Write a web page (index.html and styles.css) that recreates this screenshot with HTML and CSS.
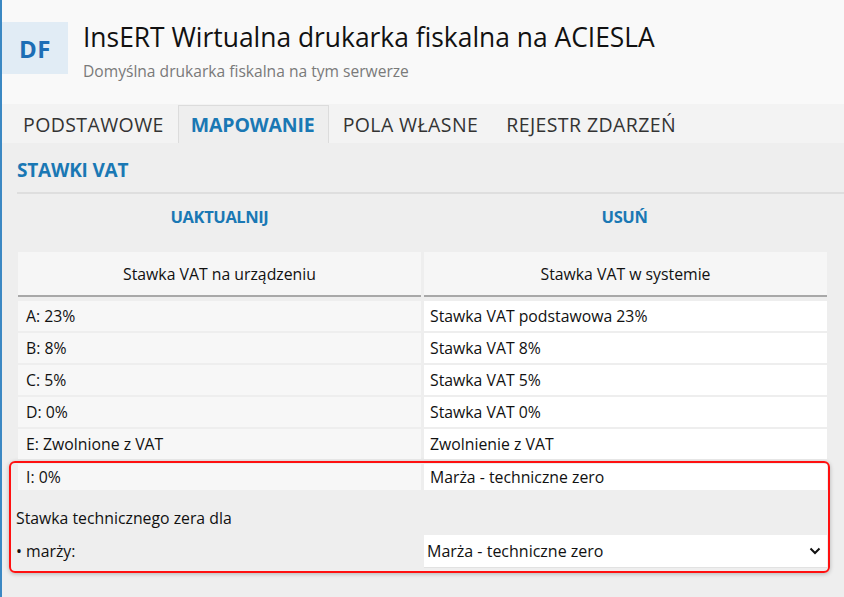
FILE: index.html
```html
<!DOCTYPE html>
<html lang="pl">

<head>
    <meta charset="UTF-8">
    <meta name="viewport" content="width=device-width, initial-scale=1.0">
    <title>Drukarka fiskalna</title>
    <link rel="stylesheet" href="styles.css">
</head>

<body>
    <div class="page">
        <div class="header">
            <div class="avatar">DF</div>
            <div class="header_text">
                <div class="header_title">InsERT Wirtualna drukarka fiskalna na ACIESLA</div>
                <div class="header_sub">Domyślna drukarka fiskalna na tym serwerze</div>
            </div>
        </div>

        <div class="tabs">
            <div class="tab">PODSTAWOWE</div>
            <div class="tab tab_active">MAPOWANIE</div>
            <div class="tab">POLA WŁASNE</div>
            <div class="tab">REJESTR ZDARZEŃ</div>
        </div>

        <div class="content">
            <div class="section_title">STAWKI VAT</div>

            <div class="actions">
                <button class="action_btn">UAKTUALNIJ</button>
                <button class="action_btn">USUŃ</button>
            </div>

            <div class="vat_table">
                <div class="vat_head">Stawka VAT na urządzeniu</div>
                <div class="vat_head">Stawka VAT w systemie</div>

                <div class="vat_cell">A: 23%</div>
                <div class="vat_cell vat_value">Stawka VAT podstawowa 23%</div>
                <div class="vat_cell">B: 8%</div>
                <div class="vat_cell vat_value">Stawka VAT 8%</div>
                <div class="vat_cell">C: 5%</div>
                <div class="vat_cell vat_value">Stawka VAT 5%</div>
                <div class="vat_cell">D: 0%</div>
                <div class="vat_cell vat_value">Stawka VAT 0%</div>
                <div class="vat_cell">E: Zwolnione z VAT</div>
                <div class="vat_cell vat_value">Zwolnienie z VAT</div>
            </div>

            <div class="highlight">
                <div class="vat_table">
                    <div class="vat_cell vat_short">I: 0%</div>
                    <div class="vat_cell vat_value vat_short">Marża - techniczne zero</div>
                </div>
                <div class="zero_label">Stawka technicznego zera dla</div>
                <div class="zero_row">
                    <div class="zero_name">• marży:</div>
                    <div class="zero_select">
                        <span>Marża - techniczne zero</span>
                        <svg width="12" height="8" viewBox="0 0 12 8">
                            <path d="M1.5 1.5 L6 6 L10.5 1.5" fill="none" stroke="#111" stroke-width="2" />
                        </svg>
                    </div>
                </div>
            </div>
        </div>
    </div>
</body>

</html>
```

FILE: styles.css
```css
body,
html {
    margin: 0;
    height: 100%;
    font-family: "Open Sans", "Noto Sans", Arial, sans-serif;
    background-color: #eeeeee;
    color: #111111;
}

.page {
    min-height: 100%;
    border-left: 2px solid #3b88c3;
    box-sizing: border-box;
    background-color: #eeeeee;
}

.header {
    display: flex;
    align-items: flex-start;
    background-color: #f9f9f9;
    height: 104px;
    padding-top: 22px;
    box-sizing: border-box;
}

.avatar {
    width: 66px;
    height: 52px;
    background-color: #e1ecf5;
    color: #1d6eb5;
    font-weight: 700;
    font-size: 24px;
    display: flex;
    align-items: center;
    justify-content: center;
    letter-spacing: 0.5px;
}

.header_text {
    margin-left: 15px;
}

.header_title {
    font-size: 26.4px;
    line-height: 30px;
    margin-top: 0;
    color: #111111;
}

.header_sub {
    font-size: 15.6px;
    line-height: 20px;
    margin-top: 9px;
    color: #7a7a7a;
}

.tabs {
    display: flex;
    height: 39px;
    background-color: #f3f3f3;
    padding-left: 7px;
}

.tab {
    display: flex;
    align-items: center;
    padding: 0 13px;
    font-size: 19.5px;
    color: #333333;
    border: 1px solid transparent;
    border-bottom: none;
    margin-top: 1px;
    letter-spacing: 0.4px;
}

.tab_active {
    background-color: #eeeeee;
    border-color: #dcdcdc;
    color: #1a78b4;
    font-weight: 700;
    padding: 0 13px 0 12px;
    letter-spacing: -0.15px;
}

.content {
    padding: 0 17px 0 15px;
}

.section_title {
    color: #1a78b4;
    font-weight: 700;
    font-size: 19px;
    letter-spacing: -0.2px;
    height: 51px;
    line-height: 54px;
    border-bottom: 2px solid #dedede;
    box-sizing: border-box;
    margin-right: -17px;
}

.actions {
    display: grid;
    grid-template-columns: 1fr 1fr;
    align-items: start;
    height: 58px;
}

.action_btn {
    background: none;
    border: none;
    font-family: inherit;
    color: #1a78b4;
    font-weight: 700;
    font-size: 16.5px;
    line-height: 20px;
    letter-spacing: -0.4px;
    padding: 13px 0 0 0;
    cursor: pointer;
}

.vat_table {
    display: grid;
    grid-template-columns: 1fr 1fr;
    column-gap: 3px;
    row-gap: 2px;
    margin-left: 1px;
}

.vat_head {
    background-color: #f6f6f6;
    height: 43px;
    display: flex;
    align-items: center;
    justify-content: center;
    font-size: 15.8px;
    border-bottom: 2px solid #a8a8a8;
    margin-bottom: 2px;
}

.vat_cell {
    background-color: #f7f7f7;
    height: 30px;
    display: flex;
    align-items: center;
    padding-left: 8px;
    font-size: 15.8px;
}

.vat_value {
    background-color: #ffffff;
    padding-left: 6px;
}

.vat_short {
    height: 26px;
}

.highlight {
    margin: 2px -3px 0 -8px;
    border: 2px solid #ff1010;
    border-radius: 6px;
    padding: 1px 1px 4px 6px;
    box-shadow: 0 1px 4px rgba(0, 0, 0, 0.25);
}

.zero_label {
    font-size: 15.8px;
    height: 45px;
    line-height: 56px;
    margin-left: -1px;
}

.zero_row {
    display: grid;
    grid-template-columns: 1fr 1fr;
    column-gap: 3px;
    align-items: center;
    margin-left: 1px;
}

.zero_name {
    font-size: 15.8px;
    margin-left: -2px;
}

.zero_select {
    background-color: #ffffff;
    height: 32px;
    display: flex;
    align-items: center;
    justify-content: space-between;
    padding: 0 6px 0 3px;
    font-size: 16px;
    box-shadow: 0 1px 0 #e2e2e2;
}
```
